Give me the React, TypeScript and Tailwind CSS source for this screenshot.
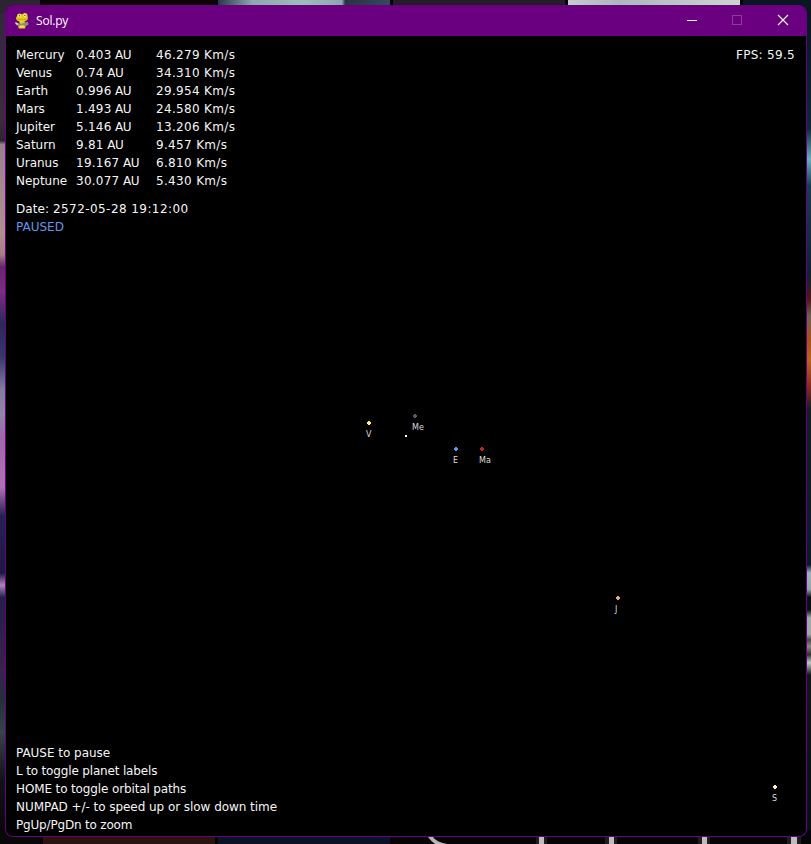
type Row = { name: string; dist: string; speed: string };

const rows: Row[] = [
  { name: 'Mercury', dist: '0.403', speed: '46.279 Km/s' },
  { name: 'Venus', dist: '0.74', speed: '34.310 Km/s' },
  { name: 'Earth', dist: '0.996', speed: '29.954 Km/s' },
  { name: 'Mars', dist: '1.493', speed: '24.580 Km/s' },
  { name: 'Jupiter', dist: '5.146', speed: '13.206 Km/s' },
  { name: 'Saturn', dist: '9.81', speed: '9.457 Km/s' },
  { name: 'Uranus', dist: '19.167', speed: '6.810 Km/s' },
  { name: 'Neptune', dist: '30.077', speed: '5.430 Km/s' },
];

// Positions are relative to the black simulation canvas.
const planets = [
  { label: 'V', x: 361, y: 385, color: '#fff07c', lx: -1 },
  { label: 'Me', x: 407, y: 378, color: '#5a5a5a', lx: -1 },
  { label: 'E', x: 448, y: 411, color: '#6495ed', lx: -1 },
  { label: 'Ma', x: 474, y: 411, color: '#c1272d', lx: -1 },
  { label: 'J', x: 610, y: 560, color: '#e3a97c', lx: -1 },
  { label: 'S', x: 767, y: 749, color: '#ffebcd', lx: -1 },
];

function Wallpaper() {
  return (
    <div className="absolute inset-0 flex flex-col justify-between bg-[#050506]">
      <div className="flex h-[14px] gap-[3px]">
        <div className="w-10 bg-[#2c2530]" />
        <div className="w-[172px] bg-[#0e0304]" />
        <div className="w-[172px] bg-[linear-gradient(90deg,#27394a,#8da8ae_20%,#9dbdbd_50%,#8da8b0_72%,#253444_74%,#36485c)]" />
        <div className="w-[172px] bg-[#241b2b]" />
        <div className="w-[172px] bg-[linear-gradient(90deg,#c5cccc,#aab8bd_30%,#cdd5cf)]" />
        <div className="flex-1 bg-[#091722]" />
      </div>
      <div className="flex flex-1 justify-between">
        <div className="w-[14px] bg-[linear-gradient(#30293a,#3a2c3c_13%,#2c2330_15.5%,#98808e_16%,#b09090_27%,#a67c83_29.5%,#642669_31%,#7d2d83_34%,#28295a_38%,#34386b_42%,#817d9f_46%,#8f86a8_49%,#a166ac_52%,#b070b8_58%,#252153_61.5%,#1c1743_68.5%,#af83c0_70%,#231f48_71.5%,#38234c_81%,#203139_84%,#354448_88%,#101217_94%,#08080a)]" />
        <div className="w-[14px] bg-[linear-gradient(#071722,#102737_14%,#66afbd_17.8%,#193d50_21%,#102131_32%,#4e171b_35%,#6b6258_37%,#a8511a_40%,#b96220_42.5%,#8a2d1b_45.5%,#141d26_48.5%,#0c1a28_67.5%,#a2b1bd_68.5%,#95a5ad_70.5%,#080e13_71.5%,#080e13_73%,#a2a8aa_74%,#a2a8aa_76%,#4a4747_76.7%,#8d8784_77.5%,#303030_78.5%,#c4c6c5_79.5%,#121519_81%,#080e13)]" />
      </div>
      <div className="relative flex h-[14px] gap-[3px]">
        <div className="w-10 bg-[#080809]" />
        <div className="w-[172px] bg-[#29150e]" />
        <div className="w-[172px] bg-[#091526]" />
        <div className="flex-1 bg-[#050506]" />
        <svg className="absolute bottom-0 left-0" width="811" height="14">
          <path d="M428 7h5q3 5 14 7h-12q-4-3-7-7Z" fill="#b7b7b7" />
          <path d="M536 7h11v7h-11zM605 7h12v7h-12zM698 7h12v7h-12zM787 7h14v7h-14z" fill="#1e1e20" />
          <path d="M539 7h5v7h-5zM609 7h5v7h-5zM702 7h5v7h-5zM791 7h6v7h-6z" fill="#bdbdbd" />
        </svg>
      </div>
    </div>
  );
}

function SnakeIcon() {
  return (
    <svg width="16" height="18" viewBox="0 0 16 18">
      <path d="M3 4Q3 1.2 5.500 1.500L8 2.300 10.500 1q3-.3 3 2.500l.4 2.500Q13.600 9 10.500 9.300L12 13l-1 3.500H5L4 14.500 6 12 5 9.300Q1.600 8.500 2.200 5.500Z" fill="#e7cd1d" />
      <path d="M3 6.600Q7.500 8.400 13 6.600L11.500 8H4.600Z" fill="#b5920f" />
      <circle cx="5.4" cy="3.800" r="1.3" fill="#f8f4c0" />
      <circle cx="10.800" cy="3.600" r="1.3" fill="#f8f4c0" />
      <path d="M5 3.300h1v1H5zM10.400 3.100h1v1h-1z" fill="#33290b" />
      <path d="M1 10l3.500 1.200 3 .5 2.500-1 4-1 .5 3-3 1.500-3-.7-3 .5-3-.8Z" fill="#8c8d82" />
      <path d="M1.200 10.200l2.300.9 1 1.900-2.800-.8Z" fill="#dedede" />
      <path d="M6 13.500h4v2H6z" fill="#f4df43" />
    </svg>
  );
}

function TitleBar() {
  return (
    <div className="flex h-[31px] shrink-0 items-center bg-[#6a007f] pl-[8px]">
      <SnakeIcon />
      <span className="ml-[6px] font-['Open_Sans','Noto_Sans',sans-serif] text-[12px] leading-4 tracking-[-0.2px] text-white">Sol.py</span>
      <svg className="mr-[16px] ml-auto" width="104" height="13" viewBox="0 0 104 13">
        <path d="M1 6.5h10" stroke="#fff" />
        <rect x="46.5" y="1.5" width="9" height="9" fill="none" stroke="#8c3a9c" />
        <path d="M92 1l10 10M102 1l-10 10" stroke="#fff" strokeWidth="1.1" />
      </svg>
    </div>
  );
}

export default function App() {
  return (
    <div className="relative h-[844px] w-[811px] overflow-hidden pt-[5px] pl-[5px]">
      <Wallpaper />
      <div className="relative flex h-[832px] w-[802px] flex-col overflow-hidden rounded-lg border border-t-0 border-[#6a007f] bg-black">
        <TitleBar />
        <div className="relative flex flex-1 flex-col justify-between pt-[10px] pr-[11px] pb-[2px] pl-[10px] font-['DejaVu_Sans',sans-serif] text-[12px] leading-[18px] whitespace-pre text-[#f5f5f5]">
          <div className="flex justify-between">
            <div>
              {rows.map((r) => (
                <div key={r.name} className="grid grid-cols-[60px_80px_90px]">
                  <span className="tracking-[-0.02px]">{r.name}</span>
                  <span>
                    <span className="tracking-[0.25px]">{r.dist}</span>
                    <span className="tracking-[-0.4px]"> AU</span>
                  </span>
                  <span className="tracking-[0.33px]">{r.speed}</span>
                </div>
              ))}
              <div className="mt-[10px]">
                <span className="tracking-[0.07px]">Date: </span>
                <span className="tracking-[0.43px]">2572-05-28 19:12:00</span>
              </div>
              <div className="text-[#6495ed]">PAUSED</div>
            </div>
            <div className="tracking-[0.3px]">FPS: 59.5</div>
          </div>
          <div>
            <div className="tracking-[-0.03px]">PAUSE to pause</div>
            <div className="tracking-[-0.16px]">L to toggle planet labels</div>
            <div className="tracking-[-0.13px]">HOME to toggle orbital paths</div>
            <div className="tracking-[-0.05px]">NUMPAD +/- to speed up or slow down time</div>
            <div className="tracking-[-0.18px]">PgUp/PgDn to zoom</div>
          </div>
          <div className="absolute top-[399px] left-[399px] size-[2px] bg-white" />
          {planets.map((p) => (
            <div key={p.label} className="absolute" style={{ left: p.x, top: p.y }}>
              <svg className="block" width="4" height="4" shapeRendering="crispEdges">
                <path d="M1 0h2v1h1v2h-1v1h-2v-1h-1v-2h1z" fill={p.color} />
              </svg>
              <span className="relative block text-[8px] leading-[10px] text-[#dddddd]" style={{ left: p.lx, top: 5 }}>
                {p.label}
              </span>
            </div>
          ))}
        </div>
      </div>
    </div>
  );
}
